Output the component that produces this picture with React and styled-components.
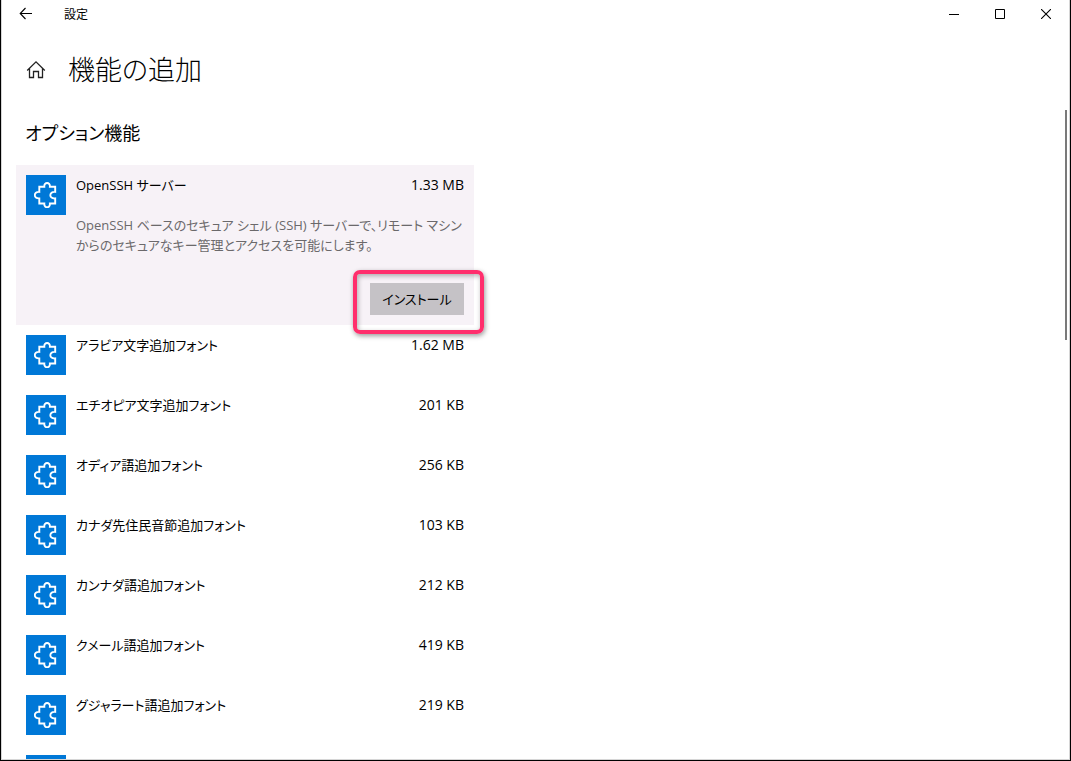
import React from "react";
import styled, { createGlobalStyle } from "styled-components";

const GlobalStyle = createGlobalStyle`
  * { box-sizing: border-box; }
  body {
    margin: 0;
    background: #fff;
    color: #000;
    font-family: "Open Sans", "Noto Sans CJK JP", sans-serif;
    font-size: 13px;
    line-height: 20px;
    font-feature-settings: "palt";
  }
  h1, h2, h3, p, ul { margin: 0; padding: 0; font-weight: 400; }
`;

const Window = styled.div`
  display: flex;
  flex-direction: column;
  height: 100vh;
  overflow: hidden;
  border: solid #000;
  border-width: 0 1px 1px;
  box-shadow: inset -1px -1px 0 #d6d6d6, inset 1px 0 0 #d6d6d6;
  padding: 0 1px 1px;
`;

const TitleBar = styled.header`
  display: flex;
  align-items: center;
  height: 28px;
  flex: none;
`;

const IconButton = styled.button`
  display: flex;
  align-items: center;
  justify-content: center;
  width: ${(p) => p.$width}px;
  height: 28px;
  padding: 0;
  border: 0;
  background: none;
  color: #000;
`;

const WindowTitle = styled.span`
  flex: 1;
  padding: 2px 0 0 14px;
  font-size: 12px;
`;

const PageHeader = styled.div`
  display: flex;
  align-items: center;
  gap: 22px;
  flex: none;
  height: 82px;
  padding: 2px 0 0 24px;
`;

const HomeLink = styled.a`
  display: flex;
  color: #000;
`;

const PageTitle = styled.h1`
  font-size: 27px;
  line-height: 36px;
  && { font-weight: 300; }
`;

const Scroller = styled.main`
  position: relative;
  flex: 1;
  min-height: 0;
  overflow: hidden;
`;

const ScrollThumb = styled.div`
  position: absolute;
  top: 0;
  right: 2px;
  width: 2px;
  height: 230px;
  background: #7a7a7a;
`;

const SectionTitle = styled.h2`
  padding: 9px 23px 18px;
  font-size: 18px;
  line-height: 28px;
`;

const FeatureList = styled.ul`
  width: 458px;
  max-width: 100%;
  margin-left: 14px;
  list-style: none;
`;

const Feature = styled.li`
  display: flex;
  gap: 10px;
  padding: 10px;
  background: ${(p) => (p.$selected ? "#f7f2f7" : "transparent")};
`;

const Tile = styled.span`
  display: flex;
  align-items: center;
  justify-content: center;
  flex: none;
  width: 40px;
  height: 40px;
  background: #0078d7;
  color: #fff;
`;

const FeatureBody = styled.div`
  flex: 1;
  min-width: 0;
`;

const FeatureHead = styled.div`
  display: flex;
  justify-content: space-between;
  align-items: baseline;
  height: 20px;
`;

const FeatureName = styled.h3`
  font-size: 13px;
`;

const FeatureSize = styled.span`
  font-size: 14px;
`;

const Description = styled.p`
  padding: 20px 0 28px;
  color: #6b696b;
`;

const Actions = styled.div`
  display: flex;
  justify-content: flex-end;
`;

const Highlight = styled.div`
  position: relative;
  &::after {
    content: "";
    position: absolute;
    inset: -13px -20px -19px -17px;
    border: 4px solid #ff2e6c;
    border-radius: 7px;
    box-shadow: 1px 2px 5px rgba(0, 0, 0, 0.4), inset 1px 2px 5px rgba(0, 0, 0, 0.3);
    pointer-events: none;
  }
`;

const InstallButton = styled.button`
  display: block;
  width: 94px;
  height: 32px;
  padding: 0;
  border: 0;
  background: #c5c2c6;
  color: #000;
  font: inherit;
  font-feature-settings: inherit;
`;

const BackIcon = () => (
  <svg width="14" height="14" viewBox="0 0 14 14" fill="none" stroke="currentColor" strokeWidth="1.1">
    <path d="M13 6.500H1.200M6.500 1L1.200 6.500L6.500 12" />
  </svg>
);

const MinimizeIcon = () => (
  <svg width="10" height="10" viewBox="0 0 10 10"><path d="M0 5h10v1H0z" fill="currentColor" /></svg>
);

const MaximizeIcon = () => (
  <svg width="10" height="10" viewBox="0 0 10 10" fill="none" stroke="currentColor"><path d="M.5.5h9v9h-9z" /></svg>
);

const CloseIcon = () => (
  <svg width="10" height="10" viewBox="0 0 10 10" stroke="currentColor" strokeWidth="1.1"><path d="M0 0l10 10M10 0L0 10" /></svg>
);

const HomeIcon = () => (
  <svg width="20" height="20" viewBox="0 0 20 20" fill="none" stroke="#222" strokeWidth="1.3">
    <path d="M1.200 10.500L10 1.900L18.800 10.500M3.500 8.500V17.500H7.500V11.500H12.500V17.500H16.500V8.500" />
  </svg>
);

const PuzzleIcon = () => (
  <svg width="24" height="26" viewBox="0 0 24 26" fill="none" stroke="currentColor" strokeWidth="1.900">
    <path d="M5.300 4.700H10.300C9.900 -0.300 16.300 -0.300 15.900 4.700H21.200V9.900C14.700 9.300 14.700 17 21.200 16.400V21.500H15.900C16.300 26.500 9.900 26.500 10.300 21.500H5.300V16.400C-.700 16.800 -.700 9.500 5.300 9.900Z" />
  </svg>
);

const fonts = [
  ["アラビア文字追加フォント", "1.62 MB"],
  ["エチオピア文字追加フォント", "201 KB"],
  ["オディア語追加フォント", "256 KB"],
  ["カナダ先住民音節追加フォント", "103 KB"],
  ["カンナダ語追加フォント", "212 KB"],
  ["クメール語追加フォント", "419 KB"],
  ["グジャラート語追加フォント", "219 KB"],
  ["グルムキー語追加フォント", ""],
];

function FeatureItem({ name, size, selected, children }) {
  return (
    <Feature $selected={selected}>
      <Tile><PuzzleIcon /></Tile>
      <FeatureBody>
        <FeatureHead>
          <FeatureName>{name}</FeatureName>
          <FeatureSize>{size}</FeatureSize>
        </FeatureHead>
        {children}
      </FeatureBody>
    </Feature>
  );
}

export default function App() {
  return (
    <>
      <GlobalStyle />
      <Window>
        <TitleBar>
          <IconButton $width={48} aria-label="戻る"><BackIcon /></IconButton>
          <WindowTitle>設定</WindowTitle>
          <IconButton $width={46} aria-label="最小化"><MinimizeIcon /></IconButton>
          <IconButton $width={46} aria-label="最大化"><MaximizeIcon /></IconButton>
          <IconButton $width={46} aria-label="閉じる"><CloseIcon /></IconButton>
        </TitleBar>
        <PageHeader>
          <HomeLink href="#" aria-label="ホーム"><HomeIcon /></HomeLink>
          <PageTitle>機能の追加</PageTitle>
        </PageHeader>
        <Scroller>
          <SectionTitle>オプション機能</SectionTitle>
          <FeatureList>
            <FeatureItem name="OpenSSH サーバー" size="1.33 MB" selected>
              <Description>
                OpenSSH ベースのセキュア シェル (SSH) サーバーで、リモート マシンからのセキュアなキー管理とアクセスを可能にします。
              </Description>
              <Actions>
                <Highlight><InstallButton>インストール</InstallButton></Highlight>
              </Actions>
            </FeatureItem>
            {fonts.map(([name, size]) => (
              <FeatureItem key={name} name={name} size={size} />
            ))}
          </FeatureList>
          <ScrollThumb />
        </Scroller>
      </Window>
    </>
  );
}
